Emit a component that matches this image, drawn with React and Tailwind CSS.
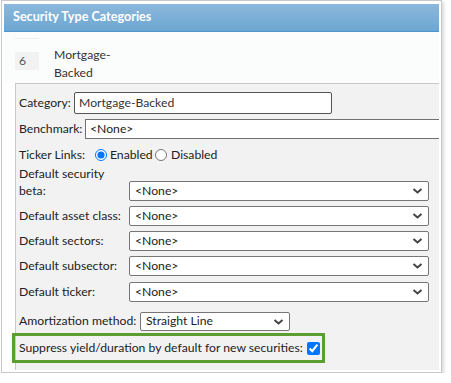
import React from "react";

const FONT = { fontFamily: '"Segoe UI", Lato, "Noto Sans", sans-serif' };

const Chevron = () => (
  <svg width="11" height="7" viewBox="0 0 11 7" className="absolute right-[5px] top-1/2 -translate-y-1/2">
    <path d="M1.5 1.5 L5.5 5 L9.5 1.5" fill="none" stroke="#444" strokeWidth="2" />
  </svg>
);

const Select = ({ value, className }) => (
  <div className={`relative flex h-full items-center rounded-[2px] border border-[#767676] bg-white pl-[5px] text-[#222] ${className}`}>
    {value}
    <Chevron />
  </div>
);

const SelectRow = ({ label, top }) => (
  <div className={`flex h-[20px] items-center ${top}`}>
    <span className="w-[110px] shrink-0">{label}</span>
    <Select value="<None>" className="w-[300px]" />
  </div>
);

export default function App() {
  return (
    <div className="whitespace-nowrap bg-white text-[12.2px] text-[#222]" style={FONT}>
      <div className="ml-[1px] flex h-[373px] w-[441px] flex-col border border-[#c8c8c8] bg-white px-[2px] pt-[3px] pb-[2px] shadow-[2px_2px_3px_rgba(0,0,0,0.15)]">
        {/* header */}
        <div className="flex h-[28px] shrink-0 items-center border-b border-[#4d96cc] bg-gradient-to-b from-[#8cb8db] to-[#6ca6d2] pl-[9px] text-[12.6px] font-bold text-white">
          Security Type Categories
        </div>

        {/* selected row */}
        <div className="h-[51px] shrink-0 bg-[#fbfcfc] pl-[11px] pt-[6px]">
          <div className="h-[1px] w-[24px] bg-[#eeeeee]" />
          <div className="mt-[7px] flex items-start">
            <div className="mt-[6px] flex h-[18px] w-[24px] items-center bg-[#f2f2f2] pl-[4px] text-[#555]">6</div>
            <div className="ml-[15px] w-[60px] whitespace-normal leading-[18px] text-[#333]">Mortgage-Backed</div>
          </div>
        </div>

        {/* details */}
        <div className="ml-[11px] flex flex-1 flex-col border-t border-l border-[#c8c8c8] bg-[#f2f2f2] pl-[3px]">
          <div className="mt-[8px] flex h-[22px] items-center">
            <span className="w-[55px] shrink-0">Category:</span>
            <div className="flex h-full w-[258px] items-center rounded-[2px] border border-[#555] bg-white pl-[4px] text-[#333]">
              Mortgage-Backed
            </div>
          </div>

          <div className="mt-[5px] flex h-[20px] items-center">
            <span className="w-[66px] shrink-0">Benchmark:</span>
            <div className="flex h-full flex-1 items-center border-y border-l border-[#707070] bg-white pl-[4px]">
              &lt;None&gt;
            </div>
          </div>

          <div className="mt-[7px] flex h-[18px] items-center">
            <span className="w-[76px] shrink-0">Ticker Links:</span>
            <input type="radio" name="tl" defaultChecked className="m-0 h-[12px] w-[12px] accent-[#0075ff]" />
            <span className="ml-[3px] w-[45px]">Enabled</span>
            <input type="radio" name="tl" className="m-0 h-[12px] w-[12px]" />
            <span className="ml-[4px]">Disabled</span>
          </div>

          <div className="mt-[3px] flex items-end">
            <span className="w-[110px] shrink-0 leading-[14px]">
              Default security
              <br />
              <span className="leading-[20px]">beta:</span>
            </span>
            <div className="h-[20px]">
              <Select value="<None>" className="w-[300px]" />
            </div>
          </div>

          <SelectRow label="Default asset class:" top="mt-[5px]" />
          <SelectRow label="Default sectors:" top="mt-[5px]" />
          <SelectRow label="Default subsector:" top="mt-[5px]" />
          <SelectRow label="Default ticker:" top="mt-[6px]" />

          <div className="mt-[10px] flex h-[19px] items-center">
            <span className="w-[121px] shrink-0">Amortization method:</span>
            <div className="h-full">
              <Select value="Straight Line" className="w-[150px]" />
            </div>
          </div>

          <div className="ml-[-7px] mt-[2px] flex h-[30px] w-[313px] items-center border-[3px] border-[#5a9e2f] pl-[4px]">
            <span>Suppress yield/duration by default for new securities:</span>
            <input type="checkbox" defaultChecked className="ml-[4px] h-[13px] w-[13px] accent-[#0075ff]" />
          </div>
        </div>
      </div>
    </div>
  );
}
